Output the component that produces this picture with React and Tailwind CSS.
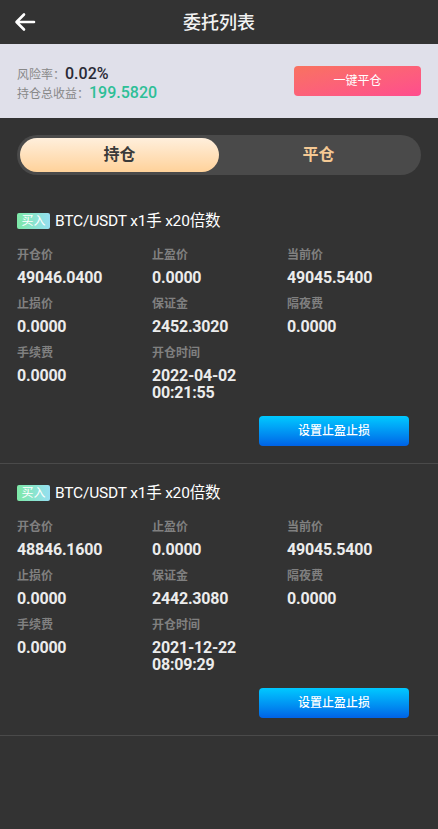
import React, { useState } from "react";

const positions = [
  {
    id: 1,
    side: "买入",
    title: "BTC/USDT x1手 x20倍数",
    fields: [
      ["开仓价", "49046.0400"],
      ["止盈价", "0.0000"],
      ["当前价", "49045.5400"],
      ["止损价", "0.0000"],
      ["保证金", "2452.3020"],
      ["隔夜费", "0.0000"],
      ["手续费", "0.0000"],
      ["开仓时间", "2022-04-02\n00:21:55"],
    ],
  },
  {
    id: 2,
    side: "买入",
    title: "BTC/USDT x1手 x20倍数",
    fields: [
      ["开仓价", "48846.1600"],
      ["止盈价", "0.0000"],
      ["当前价", "49045.5400"],
      ["止损价", "0.0000"],
      ["保证金", "2442.3080"],
      ["隔夜费", "0.0000"],
      ["手续费", "0.0000"],
      ["开仓时间", "2021-12-22\n08:09:29"],
    ],
  },
];

const font = {
  fontFamily: '"Roboto", "Noto Sans CJK SC", sans-serif',
};

const PositionCard = ({ item }) => (
  <div className="pt-[17px] pb-[17px] pl-[17px] pr-[16px] border-b border-[#4a4a4a] flex flex-col">
    <div className="flex items-center h-[24px]">
      <span className="h-[16px] w-[33px] rounded-[2px] bg-gradient-to-r from-[#7de8a6] to-[#96dff2] text-white text-[12px] leading-[16px] text-center">
        {item.side}
      </span>
      <span className="ml-[5px] text-white text-[15.5px] tracking-[-0.2px] leading-[24px]">
        {item.title}
      </span>
    </div>

    <div className="grid grid-cols-3 gap-y-[9px] mt-[13px]">
      {item.fields.map(([label, value]) => (
        <div key={label} className="flex flex-col">
          <span className="text-[12px] leading-[18px] font-bold text-[#808080]">
            {label}
          </span>
          <span className="mt-[5px] text-[16px] leading-[17px] font-bold tracking-[-0.2px] text-[#ececec] whitespace-pre-line">
            {value}
          </span>
        </div>
      ))}
    </div>

    <button className="self-end mr-[13px] mt-[15px] w-[150px] h-[30px] rounded-[4px] bg-gradient-to-b from-[#00c9ff] to-[#0062e6] text-white text-[12px] font-medium">
      设置止盈止损
    </button>
  </div>
);

export default function App() {
  const [tab, setTab] = useState(0);

  return (
    <div className="min-h-screen bg-[#333333]" style={font}>
      {/* header */}
      <div className="h-[44px] flex items-center justify-center relative">
        <button className="absolute left-[13px] top-[11px] text-white">
          <svg width="24" height="22" viewBox="0 0 24 22" fill="none">
            <path
              d="M21 11H4M11 3.5L3.5 11l7.5 7.5"
              stroke="currentColor"
              strokeWidth="2.6"
              strokeLinecap="round"
              strokeLinejoin="round"
            />
          </svg>
        </button>
        <h1 className="text-[18px] font-medium text-[#f2f2f2]">委托列表</h1>
      </div>

      {/* risk panel */}
      <div className="h-[74px] bg-[#e0e0ea] flex items-center justify-between pl-[17px] pr-[17px]">
        <div className="flex flex-col">
          <div className="flex items-baseline h-[19px]">
            <span className="text-[12px] text-[#888]">风险率：</span>
            <span className="text-[16px] font-medium text-[#2a2a36]">0.02%</span>
          </div>
          <div className="flex items-baseline h-[20px]">
            <span className="text-[12px] text-[#888]">持仓总收益：</span>
            <span className="text-[16px] font-medium text-[#2dbf97]">
              199.5820
            </span>
          </div>
        </div>
        <button className="w-[127px] h-[30px] rounded-[4px] bg-gradient-to-br from-[#f9725f] to-[#ff4c8e] text-white text-[12px]">
          一键平仓
        </button>
      </div>

      {/* tabs */}
      <div className="mx-[17px] mt-[17px] h-[40px] rounded-full bg-[#4a4a4a] p-[3px] flex">
        {["持仓", "平仓"].map((t, i) => (
          <button
            key={t}
            onClick={() => setTab(i)}
            className={
              tab === i
                ? "flex-1 rounded-full bg-gradient-to-b from-[#ffefdc] to-[#ffd29a] text-[#3a3a3a] text-[16px] font-bold"
                : "flex-1 rounded-full text-[#f4c994] text-[16px] font-bold"
            }
          >
            {t}
          </button>
        ))}
      </div>

      {/* list */}
      <div className="mt-[17px]">
        {tab === 0 &&
          positions.map((item) => <PositionCard key={item.id} item={item} />)}
      </div>
    </div>
  );
}
